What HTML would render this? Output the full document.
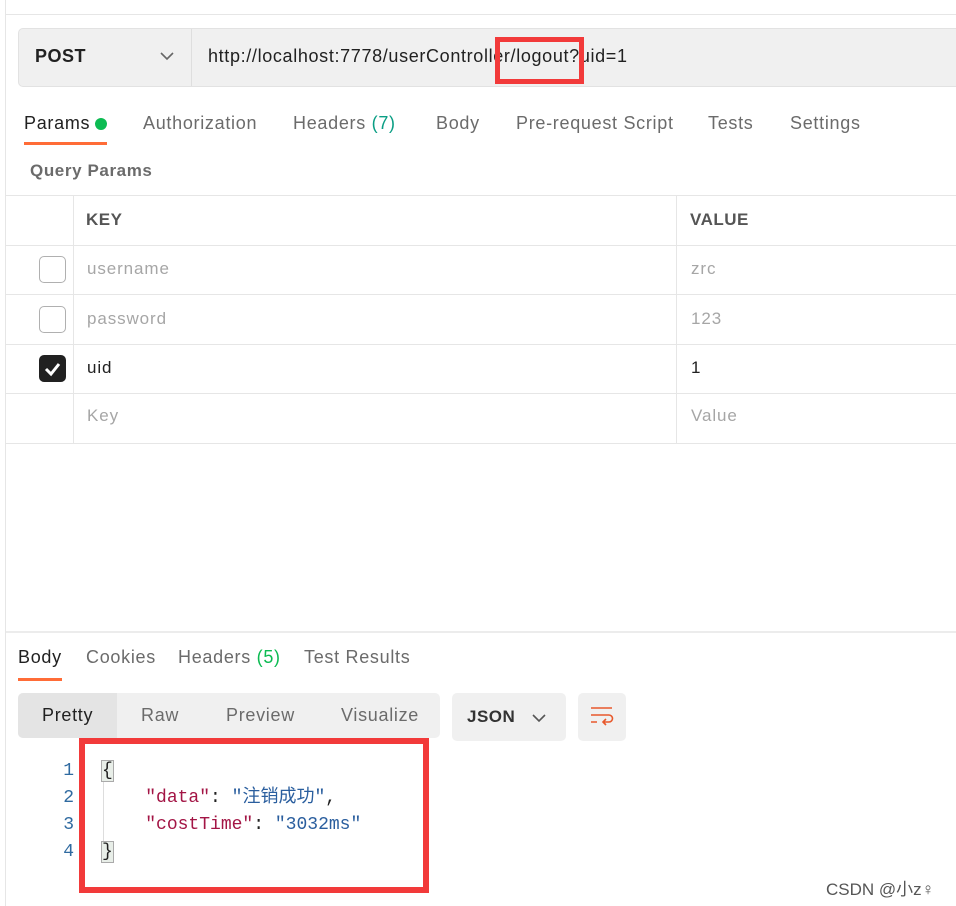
<!DOCTYPE html>
<html><head><meta charset="utf-8"><style>
*{margin:0;padding:0;box-sizing:border-box}
body{width:956px;height:906px;background:#fff;position:relative;overflow:hidden;font-family:"Liberation Sans","Noto Sans CJK SC",sans-serif;color:#212121}
.a{position:absolute;white-space:nowrap}
.t{font-size:18px;color:#6b6b6b;letter-spacing:0.7px}
.hl{position:absolute;left:6px;right:0;height:1px;background:#e6e6e6}
.cb{position:absolute;left:39px;width:27px;height:27px;border:1px solid #b0b0b0;border-radius:5px;background:#fff}
.cell{font-size:17px;color:#a6a6a6;letter-spacing:0.9px}
.mono{font-family:"Liberation Mono","Noto Sans CJK SC",monospace;font-size:18px}
</style></head><body>
<div class="a" style="left:5px;top:0;width:1px;height:906px;background:#e6e6e6"></div>
<div class="a" style="left:6px;top:14px;width:950px;height:1px;background:#e6e6e6"></div>
<div class="a" style="left:18px;top:28px;width:950px;height:59px;background:#f0f0f0;border:1px solid #e2e2e2;border-radius:5px"></div>
<div class="a" style="left:191px;top:29px;width:1px;height:57px;background:#dedede"></div>
<div class="a" style="left:35px;top:46px;font-size:18px;font-weight:bold;color:#212121;letter-spacing:0.5px">POST</div>
<svg class="a" style="left:160px;top:51px" width="14" height="10"><path d="M1 2 L7 8 L13 2" stroke="#666" stroke-width="1.6" fill="none"/></svg>
<div class="a" style="left:208px;top:46px;font-size:18px;color:#212121;letter-spacing:0.65px">http://localhost:7778/userController/logout?uid=1</div>
<div class="a" style="left:495px;top:37px;width:89px;height:47px;border:5px solid #f23a3a"></div>
<div class="a t" style="left:24px;top:113px;color:#212121">Params</div>
<div class="a" style="left:95px;top:118px;width:12px;height:12px;border-radius:50%;background:#0cbb52"></div>
<div class="a" style="left:24px;top:142px;width:83px;height:3px;background:#ff6c37"></div>
<div class="a t" style="left:143px;top:113px">Authorization</div>
<div class="a t" style="left:293px;top:113px">Headers <span style="color:#0a9e84">(7)</span></div>
<div class="a t" style="left:436px;top:113px">Body</div>
<div class="a t" style="left:516px;top:113px">Pre-request Script</div>
<div class="a t" style="left:708px;top:113px">Tests</div>
<div class="a t" style="left:790px;top:113px">Settings</div>
<div class="a" style="left:30px;top:161px;font-size:17px;font-weight:bold;color:#6b6b6b;letter-spacing:0.6px">Query Params</div>
<div class="hl" style="top:195px"></div>
<div class="hl" style="top:245px"></div>
<div class="hl" style="top:294px"></div>
<div class="hl" style="top:344px"></div>
<div class="hl" style="top:393px"></div>
<div class="hl" style="top:443px"></div>
<div class="a" style="left:73px;top:196px;width:1px;height:247px;background:#e6e6e6"></div>
<div class="a" style="left:676px;top:196px;width:1px;height:247px;background:#e6e6e6"></div>
<div class="a" style="left:86px;top:210px;font-size:17px;font-weight:bold;color:#555;letter-spacing:0.5px">KEY</div>
<div class="a" style="left:690px;top:210px;font-size:17px;font-weight:bold;color:#555;letter-spacing:0.5px">VALUE</div>
<div class="cb" style="top:256px"></div>
<div class="cb" style="top:306px"></div>
<div class="cb" style="top:355px;background:#212121;border-color:#212121"><svg width="25" height="25" style="position:absolute;left:0;top:0"><path d="M6 13 L11 18 L19 8" stroke="#fff" stroke-width="3" fill="none"/></svg></div>
<div class="a cell" style="left:87px;top:259px">username</div>
<div class="a cell" style="left:87px;top:309px">password</div>
<div class="a cell" style="left:87px;top:358px;color:#212121">uid</div>
<div class="a cell" style="left:87px;top:406px">Key</div>
<div class="a cell" style="left:691px;top:259px">zrc</div>
<div class="a cell" style="left:691px;top:309px">123</div>
<div class="a cell" style="left:691px;top:358px;color:#212121">1</div>
<div class="a cell" style="left:691px;top:406px">Value</div>
<div class="a" style="left:6px;top:631px;width:950px;height:2px;background:#ececec"></div>
<div class="a t" style="left:18px;top:647px;color:#212121">Body</div>
<div class="a" style="left:18px;top:678px;width:44px;height:3px;background:#ff6c37"></div>
<div class="a t" style="left:86px;top:647px">Cookies</div>
<div class="a t" style="left:178px;top:647px">Headers <span style="color:#0cbb52">(5)</span></div>
<div class="a t" style="left:304px;top:647px">Test Results</div>
<div class="a" style="left:18px;top:693px;width:422px;height:45px;background:#f0f0f0;border-radius:5px"></div>
<div class="a" style="left:18px;top:693px;width:99px;height:45px;background:#e4e4e4;border-radius:5px 0 0 5px"></div>
<div class="a t" style="left:42px;top:705px;color:#212121">Pretty</div>
<div class="a t" style="left:141px;top:705px">Raw</div>
<div class="a t" style="left:226px;top:705px">Preview</div>
<div class="a t" style="left:341px;top:705px">Visualize</div>
<div class="a" style="left:452px;top:693px;width:114px;height:48px;background:#f0f0f0;border-radius:5px"></div>
<div class="a" style="left:467px;top:707px;font-size:17px;font-weight:bold;color:#333;letter-spacing:0.5px">JSON</div>
<svg class="a" style="left:532px;top:713px" width="14" height="10"><path d="M1 2 L7 8 L13 2" stroke="#555" stroke-width="1.6" fill="none"/></svg>
<div class="a" style="left:578px;top:693px;width:48px;height:48px;background:#f0f0f0;border-radius:5px"></div>
<svg class="a" style="left:590px;top:706px" width="24" height="22"><path d="M1 2 H22 M1 9 H19 a3.5 3.5 0 0 1 0 7 H13 M16 13 L13 16 L16 19 M1 16 H7" stroke="#e8592c" stroke-width="1.6" fill="none"/></svg>
<div class="a mono" style="left:60px;top:758px;color:#2f6aa0;line-height:27px;text-align:right;width:14px">1<br>2<br>3<br>4</div>
<div class="a" style="left:103px;top:763px;width:1px;height:96px;background:#ddd"></div>
<div class="a mono" style="left:102px;top:758px;line-height:27px"><span style="background:#e8eee8;outline:1px solid #aaa">{</span><br>&nbsp;&nbsp;&nbsp;&nbsp;<span style="color:#a31545">"data"</span>: <span style="color:#2a5e9e">"注销成功"</span>,<br>&nbsp;&nbsp;&nbsp;&nbsp;<span style="color:#a31545">"costTime"</span>: <span style="color:#2a5e9e">"3032ms"</span><br><span style="background:#e8eee8;outline:1px solid #aaa">}</span></div>
<div class="a" style="left:79px;top:738px;width:350px;height:155px;border:6px solid #f23a3a"></div>
<div class="a" style="left:826px;top:875px;font-size:17px;color:#555">CSDN @小z♀</div>
</body></html>
